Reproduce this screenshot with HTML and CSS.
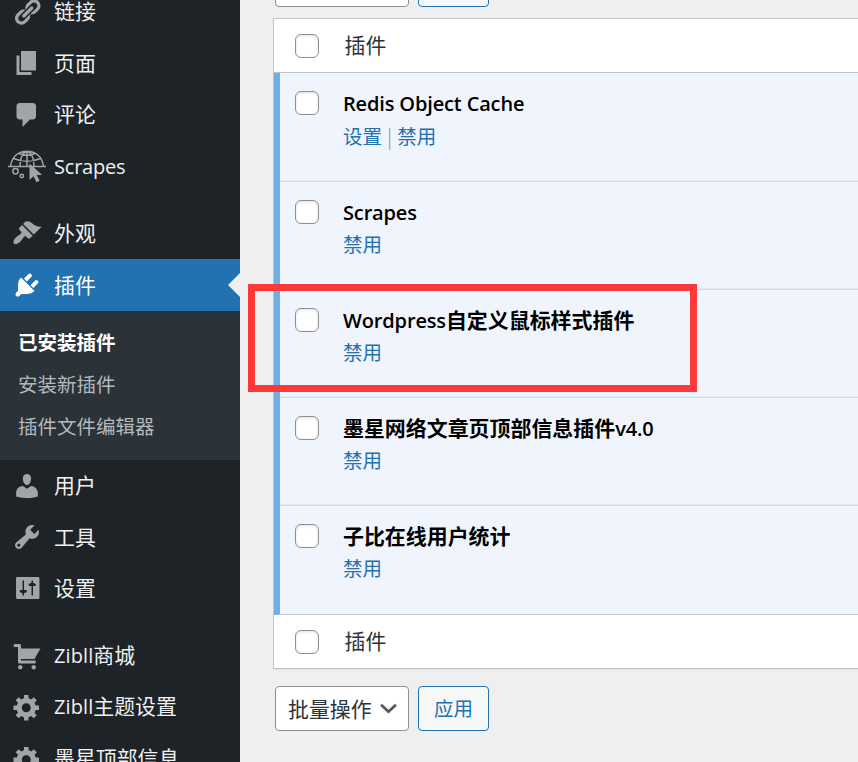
FILE: index.html
```
<!DOCTYPE html>
<html lang="zh-CN">
<head>
<meta charset="utf-8">
<title>插件</title>
<link rel="stylesheet" href="styles.css">
</head>
<body>
<div class="layout">
<nav class="sidebar">
  <a class="item"><svg class="icon" viewBox="0 0 20 20"><path d="M17.74 2.76c1.68 1.69 1.68 4.41 0 6.1l-1.53 1.52c-1.12 1.12-2.7 1.47-4.14 1.09l2.62-2.61.76-.77.76-.76c.84-.84.84-2.2 0-3.04-.84-.85-2.2-.85-3.04 0l-.77.76-3.38 3.38c-.37-1.44-.02-3.02 1.1-4.14l1.52-1.53c1.69-1.68 4.42-1.68 6.1 0zM8.59 13.43l5.34-5.34c.42-.42.42-1.1 0-1.52-.44-.43-1.13-.39-1.53 0l-5.33 5.34c-.42.42-.42 1.1 0 1.52.44.43 1.13.39 1.52 0zm-.76 2.29l4.14-4.15c.38 1.44.03 3.02-1.09 4.14l-1.52 1.53c-1.69 1.68-4.41 1.68-6.1 0-1.68-1.68-1.68-4.42 0-6.1l1.53-1.52c1.12-1.12 2.7-1.47 4.14-1.1l-4.14 4.15c-.85.84-.85 2.2 0 3.05.84.84 2.2.84 3.04 0z"/></svg><span>链接</span></a>
  <a class="item"><svg class="icon" viewBox="0 0 20 20"><path d="M6 15V2h10v13H6zm-1 1h8v2H3V5h2v11z"/></svg><span>页面</span></a>
  <a class="item"><svg class="icon" viewBox="0 0 20 20"><path d="M5 2h9c1.1 0 2 .9 2 2v7c0 1.1-.9 2-2 2h-2l-5 5v-5H5c-1.1 0-2-.9-2-2V4c0-1.1.9-2 2-2z"/></svg><span>评论</span></a>
  <a class="item"><svg class="icon globe" viewBox="0 0 38 34"><g fill="none" stroke="currentColor" stroke-width="1.5"><path d="M0 17.500h38M2.500 17C4 7.500 10.500 2.200 19 2.200S34 7.500 35.500 17M12 17C12 10 14.500 4 19 2.200C23.500 4 26 10 26 17M19 2v15M5.500 9.500Q19 15 32.500 9.500M11 4.500Q19 8 27 4.500"/><circle cx="7.500" cy="22.300" r="2.700"/><circle cx="13.800" cy="27" r="1.700"/></g><path d="M21.500 14.500V31l4-3.700 3 6 3.200-1.600-3-5.700h5.500z"/></svg><span class="latin">Scrapes</span></a>
  <div class="gap"></div>
  <a class="item"><svg class="icon" viewBox="0 0 20 20"><path d="M14.48 11.06L7.41 3.99l1.5-1.5c.5-.56 2.300-.47 3.510.32 1.210.8 1.430 1.280 2.910 2.100 1.180.64 2.450 1.260 4.450.85zm-.71.71L6.700 4.700 4.930 6.470c-.39.39-.39 1.020 0 1.410l1.060 1.060c.39.39.39 1.030 0 1.420-.6.6-1.430 1.110-2.210 1.690-.35.26-.7.53-1.010.84C1.430 14.230.4 16.080 1.400 17.070c.99 1 2.840-.03 4.180-1.360.31-.31.58-.66.85-1.020.57-.78 1.080-1.610 1.690-2.210.39-.39 1.020-.39 1.410 0l1.060 1.060c.39.39 1.020.39 1.410 0z"/></svg><span>外观</span></a>
  <a class="item current"><svg class="icon" viewBox="0 0 20 20"><path d="M13.11 4.36L9.87 7.6 8 5.73l3.24-3.24c.35-.34 1.05-.2 1.56.32.52.51.66 1.21.31 1.55zm-8 1.77l.91-1.12 9.01 9.01-1.19.84c-.71.71-2.63 1.16-3.82 1.16H6.14L4.9 17.26c-.59.59-1.54.59-2.12 0-.59-.58-.59-1.53 0-2.12l1.24-1.24v-3.88c0-1.13.4-3.19 1.09-3.89zm7.26 3.97l3.24-3.24c.34-.35 1.04-.21 1.55.31.52.51.66 1.21.31 1.55l-3.24 3.25z"/></svg><span>插件</span></a>
  <div class="submenu">
    <a class="active">已安装插件</a>
    <a>安装新插件</a>
    <a>插件文件编辑器</a>
  </div>
  <a class="item"><svg class="icon" viewBox="0 0 20 20"><path d="M10 9.25c-2.27 0-2.73-3.44-2.73-3.44C7 4.02 7.82 2 9.97 2c2.16 0 2.98 2.02 2.71 3.81 0 0-.41 3.44-2.68 3.44zm0 2.57L12.72 10c2.39 0 4.52 2.33 4.52 4.53v2.49s-3.65 1.13-7.24 1.13c-3.65 0-7.24-1.13-7.24-1.13v-2.49c0-2.25 1.94-4.48 4.47-4.48z"/></svg><span>用户</span></a>
  <a class="item tools"><svg class="icon" viewBox="0 0 20 20"><path d="M16.68 9.77c-1.34 1.34-3.3 1.67-4.95.99l-5.41 6.52c-.99.99-2.59.99-3.58 0s-.99-2.59 0-3.57l6.52-5.42c-.68-1.65-.35-3.61.99-4.95 1.28-1.28 3.12-1.62 4.72-1.06l-2.89 2.89 2.82 2.82 2.86-2.87c.53 1.58.18 3.39-1.08 4.65zM3.81 16.21c.4.39 1.04.39 1.43 0 .4-.4.4-1.04 0-1.43-.39-.4-1.03-.4-1.43 0-.39.39-.39 1.03 0 1.43z"/></svg><span>工具</span></a>
  <a class="item tools"><svg class="icon" viewBox="0 0 20 20"><path fill-rule="evenodd" d="M3.500 2.700h14q.8 0 .8.800v13q0 .8-.8.800h-14q-.8 0-.8-.8v-13q0-.8.800-.8zM7 5v6.300H5.200v1.400L7 13.500V15h1v-1.500l1.800-.8v-1.400H8V5zM13 5v1.500l-1.800.8v1.400H13V15h1V8.700h1.800V7.300L14 6.500V5z"/></svg><span>设置</span></a>
  <div class="gap"></div>
  <a class="item"><svg class="icon" viewBox="0 0 20 20"><path d="M6 13h9c.55 0 1 .45 1 1s-.45 1-1 1H5c-.55 0-1-.45-1-1V4H2c-.55 0-1-.45-1-1s.45-1 1-1h3c.55 0 1 .45 1 1v2h13l-4 7H6v1zm-.5 3c.83 0 1.500.67 1.500 1.500S6.330 19 5.500 19 4 18.330 4 17.500 4.670 16 5.500 16zm9 0c.83 0 1.500.67 1.500 1.500s-.67 1.500-1.500 1.500-1.500-.67-1.500-1.500.67-1.500 1.500-1.500z"/></svg><span><span class="latin wide">Zibll</span>商城</span></a>
  <a class="item"><svg class="icon" viewBox="0 0 20 20"><path id="gear" d="M18 12h-2.18c-.17.7-.44 1.35-.81 1.93l1.54 1.54-2.1 2.1-1.54-1.54c-.58.36-1.23.63-1.91.79V19H8v-2.18c-.68-.16-1.33-.43-1.91-.79l-1.54 1.54-2.12-2.12 1.54-1.54c-.36-.58-.63-1.23-.79-1.91H1V9.03h2.17c.16-.7.44-1.35.8-1.94L2.43 5.55l2.1-2.1 1.54 1.54c.58-.37 1.24-.64 1.93-.81V2h3v2.18c.68.16 1.33.43 1.91.79l1.54-1.54 2.12 2.12-1.54 1.54c.36.59.64 1.24.8 1.94H18V12zm-8.5 1.5c1.66 0 3-1.34 3-3s-1.34-3-3-3-3 1.34-3 3 1.34 3 3 3z"/></svg><span><span class="latin wide">Zibll</span>主题设置</span></a>
  <a class="item"><svg class="icon" viewBox="0 0 20 20"><use href="#gear"/></svg><span>墨星顶部信息</span></a>
</nav>
<main class="content">
  <div class="actions top"><div class="select"></div><div class="button"></div></div>
  <div class="table">
    <div class="head"><i class="check"></i><span>插件</span></div>
    <div class="row"><i class="check"></i><div><h3><span class="latin">Redis Object Cache</span></h3><p><a>设置</a><b>|</b><a>禁用</a></p></div></div>
    <div class="row"><i class="check"></i><div><h3><span class="latin">Scrapes</span></h3><p><a>禁用</a></p></div></div>
    <div class="row"><i class="check"></i><div><h3><span class="latin">Wordpress</span>自定义鼠标样式插件</h3><p><a>禁用</a></p></div><div class="highlight"></div></div>
    <div class="row"><i class="check"></i><div><h3>墨星网络文章页顶部信息插件<span class="latin">v4.0</span></h3><p><a>禁用</a></p></div></div>
    <div class="row"><i class="check"></i><div><h3>子比在线用户统计</h3><p><a>禁用</a></p></div></div>
    <div class="head foot"><i class="check"></i><span>插件</span></div>
  </div>
  <div class="actions"><div class="select"><span>批量操作</span><svg viewBox="0 0 16 10"><path d="M1 1.500l7 6.500 7-6.500" fill="none" stroke="#50575e" stroke-width="2.600"/></svg></div><div class="button">应用</div></div>
</main>
</div>
</body>
</html>
```
FILE: styles.css
```
* { box-sizing: border-box; }
body {
  margin: 0;
  background: #efefef;
  font-family: "Noto Sans CJK SC", sans-serif;
  font-size: 20.9px;
  color: #2c3338;
  overflow: hidden;
}
.layout { display: flex; height: 762px; overflow: hidden; background: #efefef; }
.latin { font-family: "Open Sans", sans-serif; font-size: 20px; letter-spacing: -0.2px; }
.wide { letter-spacing: 0.1px; }

.sidebar { width: 240px; flex: none; background: #1d2327; margin-top: -14px; height: 790px; }
.item {
  display: flex;
  align-items: center;
  height: 51.5px;
  line-height: 51.5px;
  padding-left: 12px;
  gap: 12px;
  color: #f0f0f1;
  white-space: nowrap;
}
.item > span:not(.latin) { margin-top: -1.5px; }
.icon { width: 30px; height: 30px; flex: none; fill: #a0a5aa; color: #a0a5aa; }
.tools .icon { margin-top: -1.5px; }
.globe { width: 38px; height: 34px; margin: 0 -4px; }
.gap { height: 15.5px; }
.current { position: relative; height: 52px; background: #2271b1; color: #fff; }
.current .icon { fill: #fff; }
.current::after {
  content: "";
  position: absolute;
  right: 0;
  top: 14px;
  border: 12px solid transparent;
  border-left-width: 0;
  border-right-color: #efefef;
}
.submenu { height: 149px; padding: 10px 0 0 18px; background: #2c3338; }
.submenu a { display: block; height: 42px; line-height: 42px; font-size: 19.5px; color: #b4b9be; }
.submenu .active { color: #fff; font-weight: 700; }

.content { flex: 1; min-width: 0; padding-left: 33px; }
.actions { display: flex; gap: 9px; padding-left: 2px; margin-top: 17px; }
.actions.top { margin-top: -38px; }
.select, .button { height: 45px; border: 1px solid #8c8f94; border-radius: 4px; background: #fff; line-height: 43px; }
.select { width: 134px; padding-left: 12px; display: flex; align-items: center; gap: 8px; }
.select span { margin-top: -1px; }
.select svg { width: 17px; height: 11px; flex: none; }
.button { width: 71px; border-color: #2271b1; background: #f6f7f7; color: #2271b1; text-align: center; font-size: 19.5px; line-height: 42px; }

.table { width: 640px; margin-top: 11px; border: 1px solid #c3c4c7; background: #fff; box-shadow: 0 1px 1px rgba(0,0,0,.04); }
.head { display: flex; align-items: center; height: 54px; padding-left: 21px; gap: 25.5px; border-bottom: 1px solid #c3c4c7; }
.head span { margin-top: -3px; }
.foot { height: 53px; border-bottom: 0; }
.check { width: 24px; height: 24px; flex: none; border: 1px solid #8c8f94; border-radius: 6px; background: #fff; box-shadow: inset 0 1px 3px rgba(0,0,0,.12); }
.row {
  position: relative;
  display: flex;
  gap: 24px;
  height: 108px;
  padding: 18px 0 0 15px;
  border-left: 6px solid #72aee6;
  background: #f0f5fd;
  box-shadow: inset 0 -1px 0 #d5dae0, inset 0 -2px 0 #e3e8ee;
}
.row:nth-child(2) { height: 109px; }
.row:nth-child(6) { border-bottom: 1px solid #c3c4c7; height: 109px; box-shadow: none; }
h3 { margin: -5px 0 0; height: 32px; line-height: 32px; font-size: 20.95px; font-weight: 700; color: #000; white-space: nowrap; }
h3 .latin { font-weight: 600; letter-spacing: -0.15px; }
p { margin: 0; height: 34px; line-height: 34px; font-size: 19.5px; color: #2271b1; }
.row:nth-child(2) p { margin-top: 1px; }
p b { margin: 0 5px; font-weight: 400; color: #a7aaad; }
.highlight { position: absolute; left: -32px; top: -6px; width: 449px; height: 108px; border: 7px solid #fc3838; z-index: 2; }
```
